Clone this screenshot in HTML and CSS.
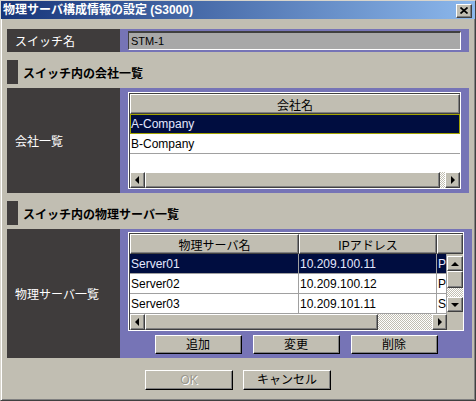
FILE: index.html
```html
<!DOCTYPE html>
<html lang="ja">
<head>
<meta charset="utf-8">
<title>物理サーバ構成情報の設定</title>
<link rel="stylesheet" href="styles.css">
</head>
<body>
<div class="window">
  <div class="titlebar">
    <span class="title">物理サーバ構成情報の設定 (S3000)</span>
    <span class="close"><svg width="8" height="7" viewBox="0 0 8 7"><path d="M0.5 0.5L7.5 6.5M7.5 0.5L0.5 6.5" stroke="#000" stroke-width="1.7" fill="none"/></svg></span>
  </div>
  <div class="content">
    <div class="row row-switch">
      <div class="label">スイッチ名</div>
      <div class="panel panel-switch">
        <div class="input">STM-1</div>
      </div>
    </div>

    <div class="section"><span class="mark"></span><span class="section-title">スイッチ内の会社一覧</span></div>

    <div class="row row-company">
      <div class="label">会社一覧</div>
      <div class="panel panel-company">
        <div class="frame">
          <div class="frame-inner">
            <div class="th">会社名</div>
            <div class="item selected focus">A-Company</div>
            <div class="item">B-Company</div>
            <div class="filler"></div>
            <div class="hscroll">
              <span class="arrow"><i class="tri tri-left"></i></span>
              <span class="thumb thumb-company"></span>
              <span class="track"></span>
              <span class="arrow"><i class="tri tri-right"></i></span>
            </div>
          </div>
        </div>
      </div>
    </div>

    <div class="section"><span class="mark"></span><span class="section-title">スイッチ内の物理サーバ一覧</span></div>

    <div class="row row-server">
      <div class="label">物理サーバ一覧</div>
      <div class="panel panel-server">
        <div class="frame">
          <div class="frame-inner">
            <div class="thead">
              <div class="th c1">物理サーバ名</div>
              <div class="th c2">IPアドレス</div>
              <div class="th c3"></div>
            </div>
            <div class="tbody">
              <div class="rows">
                <div class="tr selected"><div class="td c1">Server01</div><div class="td c2">10.209.100.11</div><div class="td c3">P</div></div>
                <div class="tr"><div class="td c1">Server02</div><div class="td c2">10.209.100.12</div><div class="td c3">P</div></div>
                <div class="tr"><div class="td c1">Server03</div><div class="td c2">10.209.101.11</div><div class="td c3">S</div></div>
              </div>
              <div class="vscroll">
                <span class="arrow varrow"><i class="tri tri-up"></i></span>
                <span class="thumb vthumb"></span>
                <span class="track"></span>
                <span class="arrow varrow"><i class="tri tri-down"></i></span>
              </div>
            </div>
            <div class="hscroll-row">
              <div class="hscroll">
                <span class="arrow"><i class="tri tri-left"></i></span>
                <span class="thumb thumb-server"></span>
                <span class="track"></span>
                <span class="arrow"><i class="tri tri-right"></i></span>
              </div>
              <div class="corner"></div>
            </div>
          </div>
        </div>
        <div class="btns">
          <button class="btn">追加</button>
          <button class="btn">変更</button>
          <button class="btn">削除</button>
        </div>
      </div>
    </div>

    <div class="footer">
      <button class="btn btn-wide disabled">OK</button>
      <button class="btn btn-wide">キャンセル</button>
    </div>
  </div>
</div>
</body>
</html>
```

FILE: styles.css
```css
* {
  box-sizing: border-box;
  margin: 0;
  padding: 0;
}

html, body {
  width: 476px;
  height: 401px;
  overflow: hidden;
}

body {
  font-family: "Liberation Sans", "Noto Sans CJK JP", sans-serif;
  font-size: 12px;
  color: #000;
  background: #c1beb2;
}

.window {
  width: 476px;
  height: 401px;
  background: #c1beb2;
  border: 1px solid;
  border-color: #d8d5cc #404040 #404040 #d8d5cc;
  box-shadow: inset 1px 1px #fff, inset -1px -1px #808080;
  display: flex;
  flex-direction: column;
}

.titlebar {
  height: 18px;
  flex: none;
  background: linear-gradient(to right, #173479, #8cb8ec);
  display: flex;
  align-items: center;
  justify-content: space-between;
  padding: 0 3px 0 2px;
  color: #fff;
  font-weight: bold;
  font-size: 12px;
}

.title {
  white-space: nowrap;
  line-height: 18px;
}

.close {
  width: 16px;
  height: 14px;
  background: #c1beb2;
  border-top: 1px solid #fff;
  border-left: 1px solid #fff;
  border-right: 1px solid #404040;
  border-bottom: 1px solid #404040;
  box-shadow: inset -1px -1px #808080;
  display: flex;
  align-items: center;
  justify-content: center;
  margin-top: 1px;
}

.content {
  padding: 10px 6px 0;
  display: flex;
  flex-direction: column;
}

.row {
  display: grid;
  grid-template-columns: 113px 1fr;
}

.label {
  background: #3f3c3c;
  color: #fff;
  display: flex;
  align-items: center;
  padding-left: 8px;
  white-space: nowrap;
}

.panel {
  background: #7674b6;
}

.row-switch {
  height: 23px;
}

.panel-switch {
  padding: 2px 8px;
}

.input {
  height: 19px;
  background: #a8a8a8;
  border-style: solid;
  border-width: 2px 1px 1px 1px;
  border-color: #404040 #fff #fff #404040;
  padding-left: 2px;
  line-height: 16px;
  font-size: 11px;
}

.section {
  display: flex;
  align-items: center;
  height: 24px;
  margin-top: 8px;
  font-weight: bold;
}

.mark {
  width: 11px;
  height: 24px;
  background: #3f3c3c;
  margin-right: 5px;
}

.row-company {
  height: 105px;
  margin-top: 4px;
}

.row-server {
  height: 129px;
  margin-top: 4px;
}

.panel-company {
  padding: 4px 8px;
  display: flex;
  flex-direction: column;
}

.panel-server {
  padding: 3px 8px 4px;
  display: flex;
  flex-direction: column;
}

.frame {
  flex: 1;
  min-height: 0;
  border: 1px solid #fff;
  background: #fff;
  display: flex;
}

.frame-inner {
  flex: 1;
  min-width: 0;
  border-top: 1px solid #404040;
  border-left: 1px solid #404040;
  display: flex;
  flex-direction: column;
  overflow: hidden;
}

.th {
  height: 20px;
  flex: none;
  background: #c1beb2;
  border-top: 1px solid #fff;
  border-left: 1px solid #fff;
  border-right: 1px solid #404040;
  border-bottom: 1px solid #404040;
  box-shadow: inset -1px -1px #808080;
  display: flex;
  align-items: center;
  justify-content: center;
  white-space: nowrap;
  overflow: hidden;
}

.item {
  height: 20px;
  flex: none;
  display: flex;
  align-items: center;
  padding-left: 1px;
  border-bottom: 1px solid #a0a0a0;
}

.selected {
  background: #000d40;
  color: #e4e8ff;
}

.focus {
  border: 1px solid #a3a300;
  padding-left: 0;
}

.filler {
  flex: 1;
}

.hscroll {
  height: 16px;
  flex: none;
  display: flex;
}

.hscroll-row .hscroll {
  flex: 1;
}

.arrow {
  width: 15px;
  height: 16px;
  flex: none;
  background: #c1beb2;
  border-top: 1px solid #fff;
  border-left: 1px solid #fff;
  border-right: 1px solid #404040;
  border-bottom: 1px solid #404040;
  box-shadow: inset -1px -1px #808080;
  display: flex;
  align-items: center;
  justify-content: center;
}

.varrow {
  width: 16px;
  height: 15px;
}

.thumb {
  flex: none;
  background: #c1beb2;
  border-top: 1px solid #fff;
  border-left: 1px solid #fff;
  border-right: 1px solid #404040;
  border-bottom: 1px solid #404040;
  box-shadow: inset -1px -1px #808080;
}

.thumb-company {
  width: 295px;
}

.thumb-server {
  width: 233px;
}

.vthumb {
  height: 17px;
}

.track {
  flex: 1;
  background: repeating-conic-gradient(#ffffff 0 25%, #c1beb2 0 50%) 0 0 / 2px 2px;
}

.tri {
  width: 0;
  height: 0;
  border: 4px solid transparent;
}

.tri-left {
  border-left-width: 0;
  border-right-color: #000;
  margin-left: -1px;
}

.tri-right {
  border-right-width: 0;
  border-left-color: #000;
  margin-left: 1px;
}

.tri-up {
  border-top-width: 0;
  border-bottom-color: #000;
}

.tri-down {
  border-bottom-width: 0;
  border-top-color: #000;
}

.thead {
  display: flex;
  height: 20px;
  flex: none;
}

.c1 {
  width: 169px;
  flex: none;
}

.c2 {
  width: 138px;
  flex: none;
}

.c3 {
  flex: 1;
  min-width: 0;
}

.tbody {
  flex: 1;
  min-height: 0;
  display: flex;
}

.rows {
  flex: 1;
  min-width: 0;
  overflow: hidden;
  display: flex;
  flex-direction: column;
}

.tr {
  display: flex;
  height: 20px;
  flex: none;
}

.td {
  border-right: 1px solid #a0a0a0;
  border-bottom: 1px solid #a0a0a0;
  display: flex;
  align-items: center;
  padding-left: 1px;
  overflow: hidden;
  white-space: nowrap;
}

.vscroll {
  width: 16px;
  flex: none;
  display: flex;
  flex-direction: column;
  padding: 2px 0 2px;
  background: #c1beb2;
}

.hscroll-row {
  display: flex;
  height: 16px;
  flex: none;
}

.corner {
  width: 16px;
  flex: none;
  background: #c1beb2;
}

.btns {
  display: flex;
  justify-content: center;
  gap: 11px;
  margin-top: 4px;
  height: 19px;
  flex: none;
}

.btn {
  width: 87px;
  height: 19px;
  font-family: "Liberation Sans", "Noto Sans CJK JP", sans-serif;
  font-size: 12px;
  color: #000;
  background: #c1beb2;
  border-top: 1px solid #fff;
  border-left: 1px solid #fff;
  border-right: 1px solid #000;
  border-bottom: 1px solid #000;
  box-shadow: inset -1px -1px #808080;
  display: flex;
  align-items: center;
  justify-content: center;
  line-height: 1;
}

.footer {
  display: flex;
  justify-content: center;
  gap: 10px;
  margin-top: 12px;
}

.btn-wide {
  width: 88px;
  height: 20px;
}

.disabled {
  color: #9a988e;
  text-shadow: 1px 1px #fff;
}
```
